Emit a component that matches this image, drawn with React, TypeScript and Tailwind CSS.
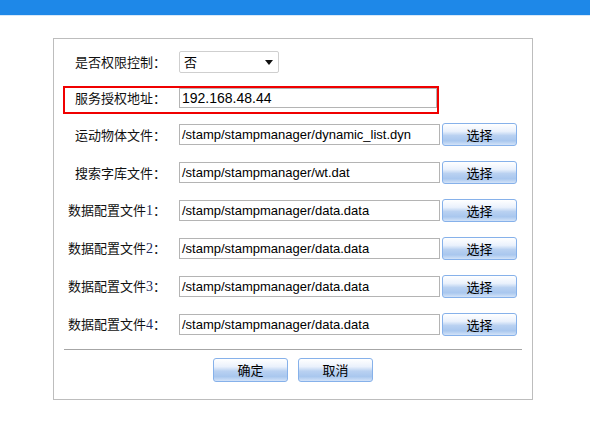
import React from "react";

const cjk = { fontFamily: '"Noto Sans CJK SC", "Liberation Sans", sans-serif' };
const arial = { fontFamily: '"Liberation Sans", Arial, sans-serif' };

function Label({ text, num }: { text: string; num?: string }) {
  return (
    <div className="w-[112px] shrink-0 text-right text-[13px] leading-[20px] text-[#111] whitespace-nowrap" style={cjk}>
      {text}
      {num && (
        <span className="text-[14px] text-[#1a2a60]" style={{ fontFamily: '"Liberation Serif", serif' }}>
          {num}
        </span>
      )}
      ：
    </div>
  );
}

function BlueButton({ children, w = "w-[75px]", h = "h-[23px]" }: { children: React.ReactNode; w?: string; h?: string }) {
  return (
    <button
      className={`${w} ${h} shrink-0 rounded-[3px] border border-[#86b1ea] text-[13px] text-black flex items-center justify-center bg-[linear-gradient(to_bottom,#ffffff_0%,#eaf1fc_35%,#b9d1f1_55%,#a9c7ee_80%,#d3e3f8_100%)]`}
      style={cjk}
    >
      {children}
    </button>
  );
}

function FileRow({ label, num, value }: { label: string; num?: string; value: string }) {
  return (
    <div className="flex items-center h-[23px]">
      <Label text={label} num={num} />
      <div className="ml-[13px] w-[261px] h-[21px] border border-[#b4b4b4] flex items-center pl-[2px] text-[13px] text-black whitespace-nowrap overflow-hidden" style={arial}>
        {value}
      </div>
      <div className="ml-[2px]">
        <BlueButton>选择</BlueButton>
      </div>
    </div>
  );
}

export default function App() {
  return (
    <div className="w-[590px] h-[428px] bg-white overflow-hidden">
      <div className="h-[15px] bg-[#1e88e8]" />
      <div className="h-[1px] bg-[#d7e8f9]" />
      <div className="ml-[53px] mt-[22px] w-[480px] h-[362px] border border-[#bdbdbd] flex flex-col">
        {/* row 1 */}
        <div className="flex items-center h-[22px] mt-[12px]">
          <Label text="是否权限控制" />
          <div className="ml-[13px] w-[100px] h-[22px] border border-[#cfcfcf] rounded-[2px] flex items-center justify-between pl-[4px] pr-[5px]">
            <span className="text-[13px] text-black" style={cjk}>否</span>
            <svg width="8" height="5" viewBox="0 0 8 5">
              <polygon points="0,0 8,0 4,5" fill="#111" />
            </svg>
          </div>
        </div>
        {/* row 2 red */}
        <div className="mt-[13px] ml-[9px] w-[376px] h-[28px] border-2 border-[#f00000] flex items-start">
          <div className="w-[101px] shrink-0 text-right text-[13px] leading-[20px] text-[#111]" style={cjk}>
            服务授权地址：
          </div>
          <div className="ml-[13px] w-[259px] h-[20px] border border-[#b4b4b4] flex items-center pl-[2px] text-[14px] text-black" style={arial}>
            192.168.48.44
          </div>
        </div>
        <div className="mt-[9px] flex flex-col gap-[15px]">
          <FileRow label="运动物体文件" value="/stamp/stampmanager/dynamic_list.dyn" />
          <FileRow label="搜索字库文件" value="/stamp/stampmanager/wt.dat" />
          <FileRow label="数据配置文件" num="1" value="/stamp/stampmanager/data.data" />
          <FileRow label="数据配置文件" num="2" value="/stamp/stampmanager/data.data" />
          <FileRow label="数据配置文件" num="3" value="/stamp/stampmanager/data.data" />
          <FileRow label="数据配置文件" num="4" value="/stamp/stampmanager/data.data" />
        </div>
        <div className="mt-[13px] ml-[10px] w-[458px] h-[1px] bg-[#a6a6a6]" />
        <div className="mt-[8px] flex justify-center gap-[10px]">
          <BlueButton h="h-[24px]">确定</BlueButton>
          <BlueButton h="h-[24px]">取消</BlueButton>
        </div>
      </div>
    </div>
  );
}
